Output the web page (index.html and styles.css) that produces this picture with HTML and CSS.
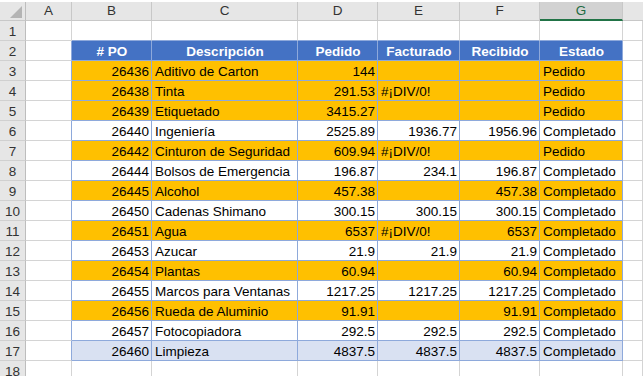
FILE: index.html
```html
<!DOCTYPE html>
<html>
<head>
<meta charset="utf-8">
<link rel="stylesheet" href="styles.css">
</head>
<body>
<div class="sheet">
  <div class="row hdr">
    <div class="c corner"><span class="tri"></span></div>
    <div class="c ch">A</div><div class="c ch">B</div><div class="c ch">C</div><div class="c ch">D</div><div class="c ch">E</div><div class="c ch">F</div><div class="c ch sel">G</div><div class="c ch last"></div>
  </div>
  <div class="row">
    <div class="c rh">1</div><div class="c tl"></div><div class="c tt"></div><div class="c tt"></div><div class="c tt"></div><div class="c tt"></div><div class="c tt"></div><div class="c tt"></div><div class="c"></div>
  </div>
  <div class="row th">
    <div class="c rh">2</div><div class="c tl"></div><div class="c t">#&nbsp;PO</div><div class="c t">Descripción</div><div class="c t">Pedido</div><div class="c t">Facturado</div><div class="c t">Recibido</div><div class="c t">Estado</div><div class="c"></div>
  </div>
  <div class="row o"><div class="c rh">3</div><div class="c tl"></div><div class="c t n">26436</div><div class="c t">Aditivo de Carton</div><div class="c t n">144</div><div class="c t"></div><div class="c t"></div><div class="c t">Pedido</div><div class="c"></div></div>
  <div class="row o"><div class="c rh">4</div><div class="c tl"></div><div class="c t n">26438</div><div class="c t">Tinta</div><div class="c t n">291.53</div><div class="c t">#¡DIV/0!</div><div class="c t"></div><div class="c t">Pedido</div><div class="c"></div></div>
  <div class="row o"><div class="c rh">5</div><div class="c tl"></div><div class="c t n">26439</div><div class="c t">Etiquetado</div><div class="c t n">3415.27</div><div class="c t"></div><div class="c t"></div><div class="c t">Pedido</div><div class="c"></div></div>
  <div class="row"><div class="c rh">6</div><div class="c tl"></div><div class="c t n">26440</div><div class="c t">Ingeniería</div><div class="c t n">2525.89</div><div class="c t n">1936.77</div><div class="c t n">1956.96</div><div class="c t">Completado</div><div class="c"></div></div>
  <div class="row o"><div class="c rh">7</div><div class="c tl"></div><div class="c t n">26442</div><div class="c t">Cinturon de Seguridad</div><div class="c t n">609.94</div><div class="c t">#¡DIV/0!</div><div class="c t"></div><div class="c t">Pedido</div><div class="c"></div></div>
  <div class="row"><div class="c rh">8</div><div class="c tl"></div><div class="c t n">26444</div><div class="c t">Bolsos de Emergencia</div><div class="c t n">196.87</div><div class="c t n">234.1</div><div class="c t n">196.87</div><div class="c t">Completado</div><div class="c"></div></div>
  <div class="row o"><div class="c rh">9</div><div class="c tl"></div><div class="c t n">26445</div><div class="c t">Alcohol</div><div class="c t n">457.38</div><div class="c t"></div><div class="c t n">457.38</div><div class="c t">Completado</div><div class="c"></div></div>
  <div class="row"><div class="c rh">10</div><div class="c tl"></div><div class="c t n">26450</div><div class="c t">Cadenas Shimano</div><div class="c t n">300.15</div><div class="c t n">300.15</div><div class="c t n">300.15</div><div class="c t">Completado</div><div class="c"></div></div>
  <div class="row o"><div class="c rh">11</div><div class="c tl"></div><div class="c t n">26451</div><div class="c t">Agua</div><div class="c t n">6537</div><div class="c t">#¡DIV/0!</div><div class="c t n">6537</div><div class="c t">Completado</div><div class="c"></div></div>
  <div class="row"><div class="c rh">12</div><div class="c tl"></div><div class="c t n">26453</div><div class="c t">Azucar</div><div class="c t n">21.9</div><div class="c t n">21.9</div><div class="c t n">21.9</div><div class="c t">Completado</div><div class="c"></div></div>
  <div class="row o"><div class="c rh">13</div><div class="c tl"></div><div class="c t n">26454</div><div class="c t">Plantas</div><div class="c t n">60.94</div><div class="c t"></div><div class="c t n">60.94</div><div class="c t">Completado</div><div class="c"></div></div>
  <div class="row"><div class="c rh">14</div><div class="c tl"></div><div class="c t n">26455</div><div class="c t">Marcos para Ventanas</div><div class="c t n">1217.25</div><div class="c t n">1217.25</div><div class="c t n">1217.25</div><div class="c t">Completado</div><div class="c"></div></div>
  <div class="row o"><div class="c rh">15</div><div class="c tl"></div><div class="c t n">26456</div><div class="c t">Rueda de Aluminio</div><div class="c t n">91.91</div><div class="c t"></div><div class="c t n">91.91</div><div class="c t">Completado</div><div class="c"></div></div>
  <div class="row"><div class="c rh">16</div><div class="c tl"></div><div class="c t n">26457</div><div class="c t">Fotocopiadora</div><div class="c t n">292.5</div><div class="c t n">292.5</div><div class="c t n">292.5</div><div class="c t">Completado</div><div class="c"></div></div>
  <div class="row b"><div class="c rh">17</div><div class="c tl"></div><div class="c t n">26460</div><div class="c t">Limpieza</div><div class="c t n">4837.5</div><div class="c t n">4837.5</div><div class="c t n">4837.5</div><div class="c t">Completado</div><div class="c"></div></div>
  <div class="row"><div class="c rh">18</div><div class="c"></div><div class="c"></div><div class="c"></div><div class="c"></div><div class="c"></div><div class="c"></div><div class="c"></div><div class="c"></div></div>
</div>
</body>
</html>
```
FILE: styles.css
```css
html, body {
  margin: 0;
  padding: 0;
  background: #ffffff;
}
body {
  font-family: "Liberation Sans", Arial, sans-serif;
  font-size: 13.5px;
  color: #000000;
  overflow: hidden;
}
.sheet {
  padding-top: 2px;
  width: 643px;
}
.row {
  display: grid;
  grid-template-columns: 26px 46px 80px 146px 80px 82px 80px 83px 1fr;
  height: 20px;
}
.c {
  box-sizing: border-box;
  height: 20px;
  border-right: 1px solid #d4d4d4;
  border-bottom: 1px solid #d4d4d4;
  padding: 1px 2px 0 3px;
  line-height: 19px;
  white-space: nowrap;
  overflow: hidden;
}
.hdr {
  height: 19px;
}
.hdr .c {
  height: 19px;
  line-height: 18px;
  padding: 0;
  background: #e6e6e6;
  border-right: 1px solid #c8c8c8;
  border-bottom: 1px solid #c8c8c8;
  text-align: center;
  color: #333333;
}
.hdr .corner {
  position: relative;
  border-right: 1px solid #bdbdbd;
}
.tri {
  position: absolute;
  right: 3px;
  bottom: 2px;
  width: 0;
  height: 0;
  border-left: 12px solid transparent;
  border-bottom: 12px solid #b4b4b4;
}
.hdr .sel {
  background: #d2d2d2;
  color: #1e6b41;
  border-bottom: 2px solid #217346;
  height: 19px;
}
.hdr .last {
  border-right: none;
}
.rh {
  background: #e6e6e6;
  color: #333333;
  text-align: center;
  padding-left: 0;
  padding-right: 0;
  border-right: 1px solid #bdbdbd;
  border-bottom: 1px solid #d0d0d0;
}
.tl {
  border-right-color: #d4d4d4;
}
.tt {
  border-bottom-color: #8ea9db;
}
.t {
  border-right: 1px solid #8ea9db;
  border-bottom: 1px solid #8ea9db;
}
.th .tl,
.o .tl,
.b .tl,
.row .tl {
  border-right-color: #8ea9db;
}
.row:nth-child(2) .tl,
.row:last-child .c:nth-child(2) {
  border-right-color: #d4d4d4;
}
.th .t {
  background: #4472c4;
  color: #ffffff;
  font-weight: bold;
  text-align: center;
}
.o .t {
  background: #ffc000;
}
.b .t {
  background: #d9e1f2;
}
.n {
  text-align: right;
}
```
